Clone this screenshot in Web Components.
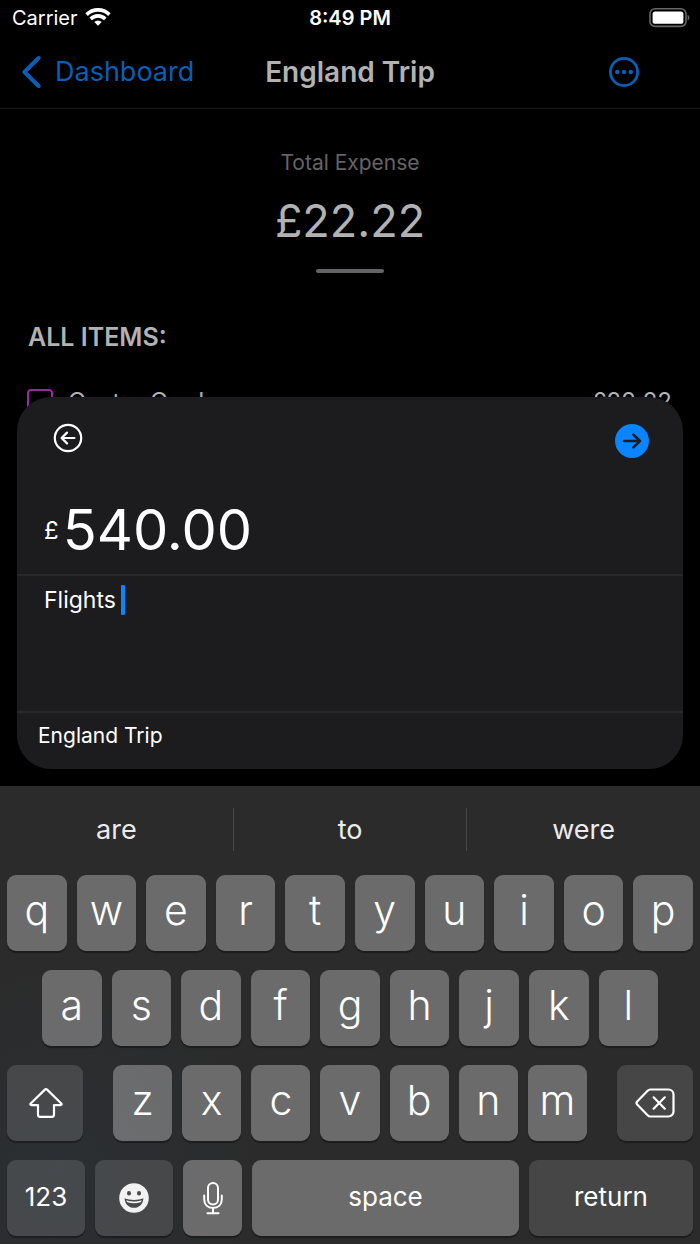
<!DOCTYPE html>
<html lang="en">
<head>
<meta charset="utf-8">
<meta name="viewport" content="width=device-width, initial-scale=1">
<title>England Trip</title>
<style>
  body {
    margin: 0;
    background: #000;
    color: #fff;
    font-family: Inter, "Liberation Sans", sans-serif;
  }
</style>
</head>
<body>
<expense-app></expense-app>

<script>
const attach = (element, html) => {
  const template = document.createElement('template');
  template.innerHTML = html;
  element.attachShadow({ mode: 'open' });
  element.shadowRoot.appendChild(template.content.cloneNode(true));
};

class StatusBar extends HTMLElement {
  constructor() {
    super();
    attach(this, `
      <style>
        :host {
          display: grid;
          grid-template-columns: 1fr auto 1fr;
          align-items: center;
          height: 36px;
          padding: 0 10px;
          font-size: 20px;
        }
        .left { display: flex; align-items: center; gap: 7px; padding-left: 2px; }
        .time { font-weight: 600; }
        .battery { justify-self: end; }
        svg { display: block; }
      </style>
      <div class="left">
        <span>Carrier</span>
        <svg width="26" height="20" viewBox="0 0 26 20" fill="none" stroke="#fff" stroke-width="3.6">
          <path d="M1.6 6.6a16.2 16.2 0 0 1 22.8 0"/>
          <path d="M5.7 10.9a10.3 10.3 0 0 1 14.6 0"/>
          <path d="M13 17.8l-3.7-3.7a5.2 5.2 0 0 1 7.4 0z" fill="#fff" stroke="none"/>
        </svg>
      </div>
      <span class="time">8:49 PM</span>
      <svg class="battery" width="41" height="20" viewBox="0 0 41 20">
        <rect x="1" y="0.8" width="36" height="17.6" rx="5" fill="none" stroke="#666" stroke-width="1.6"/>
        <rect x="3.6" y="3.4" width="30.8" height="12.4" rx="2.6" fill="#fff"/>
        <path d="M38.6 6.8v5.8c2.4-1 2.4-4.8 0-5.8z" fill="#666"/>
      </svg>
    `);
  }
}

class NavBar extends HTMLElement {
  constructor() {
    super();
    attach(this, `
      <style>
        :host {
          display: grid;
          grid-template-columns: 1fr auto 1fr;
          align-items: center;
          height: 71px;
          padding: 0 21px 1px;
          border-bottom: 1px solid #161617;
        }
        a {
          display: flex;
          align-items: center;
          gap: 13px;
          color: #075fb8;
          font-size: 27px;
          text-decoration: none;
        }
        h1 { margin: 0; font-size: 28px; font-weight: 600; color: #b2b2b2; }
        button {
          justify-self: end;
          margin-right: 39px;
          padding: 0;
          border: 0;
          background: none;
        }
        svg { display: block; }
      </style>
      <a href="#dashboard">
        <svg width="21" height="34" viewBox="0 0 21 34" fill="none" stroke="currentColor" stroke-width="4" stroke-linecap="round" stroke-linejoin="round">
          <path d="M17.6 3L3.4 17l14.2 14"/>
        </svg>
        Dashboard
      </a>
      <h1><slot></slot></h1>
      <button type="button" aria-label="More">
        <svg width="32" height="32" viewBox="0 0 32 32" fill="#075fb8">
          <circle cx="16" cy="16" r="13.6" fill="none" stroke="#075fb8" stroke-width="2.8"/>
          <circle cx="9.3" cy="16" r="2.3"/>
          <circle cx="16" cy="16" r="2.3"/>
          <circle cx="22.7" cy="16" r="2.3"/>
        </svg>
      </button>
    `);
  }
}

class TripSummary extends HTMLElement {
  constructor() {
    super();
    attach(this, `
      <style>
        :host {
          display: flex;
          flex-direction: column;
          align-items: center;
          padding-top: 40px;
        }
        .label { font-size: 21px; line-height: 28px; color: #646466; }
        .total { margin-top: 14px; font-size: 45px; line-height: 60px; color: #b2b2b2; }
        .handle { width: 68px; height: 4px; margin-top: 18px; border-radius: 2px; background: #646466; }
      </style>
      <div class="label">Total Expense</div>
      <div class="total"><slot></slot></div>
      <div class="handle"></div>
    `);
  }
}

class ExpenseItem extends HTMLElement {
  constructor() {
    super();
    attach(this, `
      <style>
        :host {
          display: flex;
          align-items: flex-start;
          gap: 15px;
          font-size: 24px;
          line-height: 26px;
          color: #b2b2b2;
        }
        .box { box-sizing: border-box; width: 26px; height: 26px; border: 2px solid #a023ab; border-radius: 4px; }
        .name { flex: 1; }
      </style>
      <span class="box"></span>
      <span class="name"><slot></slot></span>
      <slot name="price"></slot>
    `);
  }
}

class EntryCard extends HTMLElement {
  constructor() {
    super();
    attach(this, `
      <style>
        :host {
          display: block;
          border-radius: 34px;
          background: #1c1c1e;
        }
        button { display: block; padding: 0; border: 0; background: none; }
        svg { display: block; }
        .actions {
          display: flex;
          justify-content: space-between;
          align-items: flex-start;
          padding: 26px 33px 0 36px;
        }
        .amount {
          display: flex;
          align-items: center;
          gap: 4px;
          padding: 35px 28px 8px 27px;
          border-bottom: 2px solid #29292b;
        }
        .amount label { font-size: 24px; }
        input, textarea {
          border: 0;
          padding: 0;
          outline: 0;
          background: none;
          color: inherit;
          font-family: inherit;
          resize: none;
        }
        input { flex: 1; min-width: 0; height: 72px; font-size: 56px; }
        .memo { display: flex; gap: 5px; height: 127px; padding: 8px 27px 0; }
        textarea {
          field-sizing: content;
          font-size: 23px;
          line-height: 32px;
        }
        .caret { width: 4px; height: 30px; margin-top: 1px; border-radius: 1px; background: #0a84ff; }
        footer {
          padding: 8px 21px 18px;
          border-top: 2px solid #29292b;
          font-size: 21px;
          line-height: 30px;
        }
      </style>
      <div class="actions">
        <button type="button" aria-label="Back">
          <svg width="30" height="30" viewBox="0 0 30 30" fill="none" stroke="#fff" stroke-width="2.2" stroke-linecap="round" stroke-linejoin="round">
            <circle cx="15" cy="15" r="13.2"/>
            <path d="M21.4 15H8.6M14 9.6L8.6 15l5.4 5.4"/>
          </svg>
        </button>
        <button type="button" aria-label="Save">
          <svg width="36" height="36" viewBox="0 0 36 36" fill="none" stroke="#1c1c1e" stroke-width="2.6" stroke-linecap="round" stroke-linejoin="round">
            <circle cx="18" cy="18" r="17" fill="#0a84ff" stroke="none"/>
            <path d="M10 18h16M19.4 11.6L26 18l-6.6 6.4"/>
          </svg>
        </button>
      </div>
      <div class="amount">
        <label for="amount">£</label>
        <input id="amount" type="text" inputmode="decimal" value="540.00">
      </div>
      <div class="memo">
        <textarea rows="1" aria-label="Description">Flights</textarea>
        <span class="caret"></span>
      </div>
      <footer><slot></slot></footer>
    `);
  }
}

class KeyCap extends HTMLElement {
  constructor() {
    super();
    attach(this, `
      <style>
        :host { display: block; flex: 1 1 0; min-width: 0; height: 76px; }
        button {
          display: flex;
          align-items: center;
          justify-content: center;
          width: 100%;
          height: 100%;
          padding: 0 0 6px;
          border: 0;
          border-radius: 9px;
          background: rgba(255, 255, 255, 0.3);
          box-shadow: 0 2px 1px rgba(0, 0, 0, 0.35);
          color: #fff;
          font-family: inherit;
          font-size: 41px;
          font-weight: 300;
        }
        :host([dark]) button { background: rgba(255, 255, 255, 0.13); }
        :host([word]) button { padding-bottom: 4px; font-size: 26px; font-weight: 400; }
        :host([icon]) button { padding: 0; }
      </style>
      <button type="button"><slot></slot></button>
    `);
  }

  connectedCallback() {
    if (this.getAttribute('label')) {
      this.shadowRoot.querySelector('button').setAttribute('aria-label', this.getAttribute('label'));
    }
  }
}

class OnscreenKeyboard extends HTMLElement {
  constructor() {
    super();
    const keys = (letters) => [...letters].map((letter) => `<key-cap>${letter}</key-cap>`).join('');

    attach(this, `
      <style>
        :host {
          display: flex;
          flex-direction: column;
          gap: 19px;
          padding: 0 7px 8px;
          background: radial-gradient(circle at 8% 84%, #2b2f33, #2b2b2b 28%) #2b2b2b;
        }
        .suggestions { display: flex; margin: 0 -7px; padding: 22px 0 5px; }
        .suggestions button {
          flex: 1 1 0;
          height: 43px;
          padding: 0;
          border: 0;
          background: none;
          color: #ebebeb;
          font-family: inherit;
          font-size: 27px;
        }
        .suggestions button + button { border-left: 1px solid #484848; }
        .row { display: flex; gap: 10px; }
        .home { padding: 0 35px; }
        .letters { display: flex; flex: 1; gap: 10px; margin: 0 20px; }
        .edit { flex: 0 0 76px; }
        .mode { flex: 0 0 78px; }
        .mic { flex: 0 0 59px; }
        .return { flex: 0 0 164px; }
        svg { display: block; }
      </style>
      <div class="suggestions">
        <button type="button">are</button>
        <button type="button">to</button>
        <button type="button">were</button>
      </div>
      <div class="row">${keys('qwertyuiop')}</div>
      <div class="row home">${keys('asdfghjkl')}</div>
      <div class="row">
        <key-cap class="edit" dark icon label="Shift">
          <svg width="36" height="32" viewBox="0 0 36 32" fill="none" stroke="#fff" stroke-width="2.2" stroke-linejoin="round">
            <path d="M17.9 2.6a1.5 1.5 0 0 1 2.2 0L34.3 16.5c.7.8.3 1.6-.7 1.6H27v9.7a2 2 0 0 1-2 2H13a2 2 0 0 1-2-2v-9.7H4.400c-1 0-1.4-.8-.7-1.6z"/>
          </svg>
        </key-cap>
        <div class="letters">${keys('zxcvbnm')}</div>
        <key-cap class="edit" dark icon label="Delete">
          <svg width="40" height="30" viewBox="0 0 40 30" fill="none" stroke="#fff" stroke-width="2.2" stroke-linecap="round" stroke-linejoin="round">
            <path d="M15.5 1.5H33.5a5 5 0 0 1 5 5v17a5 5 0 0 1-5 5H15.5a4 4 0 0 1-2.9-1.2L2.2 16.4a2 2 0 0 1 0-2.8L12.6 2.7a4 4 0 0 1 2.9-1.2z"/>
            <path d="M18.6 9.3l11.2 11.4M29.8 9.3L18.6 20.7"/>
          </svg>
        </key-cap>
      </div>
      <div class="row">
        <key-cap class="mode" dark word>123</key-cap>
        <key-cap class="mode" dark icon label="Emoji">
          <svg width="30" height="30" viewBox="0 0 30 30">
            <circle cx="15" cy="15" r="14.8" fill="#f2f2f2"/>
            <ellipse cx="10" cy="10.2" rx="2" ry="2.2" fill="#46484a"/>
            <ellipse cx="20" cy="10.2" rx="2" ry="2.2" fill="#46484a"/>
            <path d="M5.6 15.2c2.8 1.2 6 1.7 9.4 1.7s6.6-.5 9.4-1.7c-.3 5.9-4.3 9.6-9.4 9.6s-9.100-3.700-9.400-9.600z" fill="#46484a"/>
            <path d="M7.2 17.2c2.400.8 5 1.200 7.800 1.200s5.400-.4 7.800-1.200c-.3 1-.8 1.600-1.300 2.100-2 .6-4.200.9-6.500.9s-4.500-.3-6.500-.9c-.5-.5-1-1.100-1.300-2.100z" fill="#f2f2f2"/>
          </svg>
        </key-cap>
        <key-cap class="mic" icon label="Dictate">
          <svg width="20" height="34" viewBox="0 0 20 34" fill="none" stroke="#fff" stroke-width="2" stroke-linecap="round">
            <rect x="5" y="2" width="10" height="21.5" rx="5"/>
            <path d="M1.2 14.5v3.8c0 5.3 3.4 8.7 8.8 8.7s8.8-3.4 8.8-8.7v-3.8M10 27v5.3M4.5 32.3h11"/>
          </svg>
        </key-cap>
        <key-cap word>space</key-cap>
        <key-cap class="return" dark word>return</key-cap>
      </div>
    `);
  }
}

class ExpenseApp extends HTMLElement {
  constructor() {
    super();
    attach(this, `
      <style>
        :host { display: flex; flex-direction: column; min-height: 100vh; }
        /* the entry card shares the cell with the trip and covers its lower part */
        main { display: grid; grid-template-columns: minmax(0, 1fr); flex: 1; }
        .trip, entry-card { grid-area: 1 / 1; }
        entry-card { align-self: end; margin: 0 17px 17px; }
        h2 { margin: 48px 28px 0; font-size: 25px; line-height: 32px; font-weight: 600; color: #b2b2b2; }
        expense-item { margin: 36px 28px 0 27px; }
      </style>
      <status-bar></status-bar>
      <nav-bar>England Trip</nav-bar>
      <main>
        <div class="trip">
          <trip-summary>£22.22</trip-summary>
          <h2>ALL ITEMS:</h2>
          <expense-item>Oyster Card<span slot="price">£22.22</span></expense-item>
        </div>
        <entry-card>England Trip</entry-card>
      </main>
      <onscreen-keyboard></onscreen-keyboard>
    `);
  }
}

customElements.define('status-bar', StatusBar);
customElements.define('nav-bar', NavBar);
customElements.define('trip-summary', TripSummary);
customElements.define('expense-item', ExpenseItem);
customElements.define('entry-card', EntryCard);
customElements.define('key-cap', KeyCap);
customElements.define('onscreen-keyboard', OnscreenKeyboard);
customElements.define('expense-app', ExpenseApp);
</script>
</body>
</html>
